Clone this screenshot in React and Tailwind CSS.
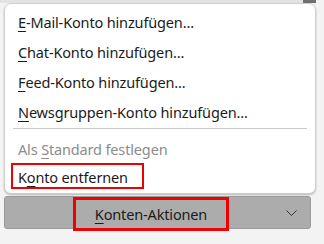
export default function App() {
  const items = [
    { key: 'E', post: '-Mail-Konto hinzufügen...' },
    { key: 'C', post: 'hat-Konto hinzufügen...' },
    { key: 'F', post: 'eed-Konto hinzufügen...' },
    { key: 'N', post: 'ewsgruppen-Konto hinzufügen...' },
  ];

  return (
    <div className="w-[324px] h-[244px] overflow-hidden bg-[#f3f3f3] font-['Segoe_UI','Noto_Sans',sans-serif] text-[14.5px] tracking-[-0.15px] text-[#1b1b1b]">
      {/* Hintergrund oben */}
      <div className="flex h-[3px]">
        <div className="w-[303px] bg-[#e2e2e2]" />
        <div className="w-[13px] bg-[#6f6f6f]" />
      </div>

      {/* Kontextmenü */}
      <div className="ml-[4px] w-[312px] h-[191px] bg-white border border-[#cfcfcf] rounded-[7px] shadow-[0_1px_2px_rgba(0,0,0,0.25)] pt-[3px] flex flex-col">
        {items.map((it) => (
          <div key={it.key} className="h-[30px] pl-[13px] flex items-center leading-none">
            <span>
              <span className="underline underline-offset-[3px]">{it.key}</span>
              {it.post}
            </span>
          </div>
        ))}
        <div className="h-[8px] flex flex-col px-[8px] pt-[1px]">
          <div className="h-px bg-[#cacaca]" />
        </div>
        <div className="h-[28px] pl-[13px] flex items-center text-[#8c8c8c] leading-none">
          <span>
            Als <span className="underline underline-offset-[3px]">S</span>tandard festlegen
          </span>
        </div>
        <div className="ml-[6px] w-[133px] h-[26px] border-[2px] border-[#f00000] pl-[5px] pt-[2px] flex items-center leading-none">
          <span>
            K<span className="underline underline-offset-[3px]">o</span>nto entfernen
          </span>
        </div>
      </div>

      {/* Schaltfläche */}
      <div className="mt-[2px] ml-[4px] w-[307px] h-[33px] bg-[#acacac] border border-[#9a9a9a] rounded-[3px] flex items-start">
        <div className="ml-[68px] w-[156px] h-[34px] border-[3px] border-[#f00000] flex items-center justify-center leading-none">
          <span>
            <span className="underline underline-offset-[3px]">K</span>onten-Aktionen
          </span>
        </div>
        <div className="flex-1 h-full flex items-center justify-end pr-[13px]">
          <svg width="11" height="6" viewBox="0 0 11 6" fill="none">
            <path d="M0.5 0.5 L5.5 5.5 L10.5 0.5" stroke="#333" strokeWidth="1" />
          </svg>
        </div>
      </div>
    </div>
  );
}
